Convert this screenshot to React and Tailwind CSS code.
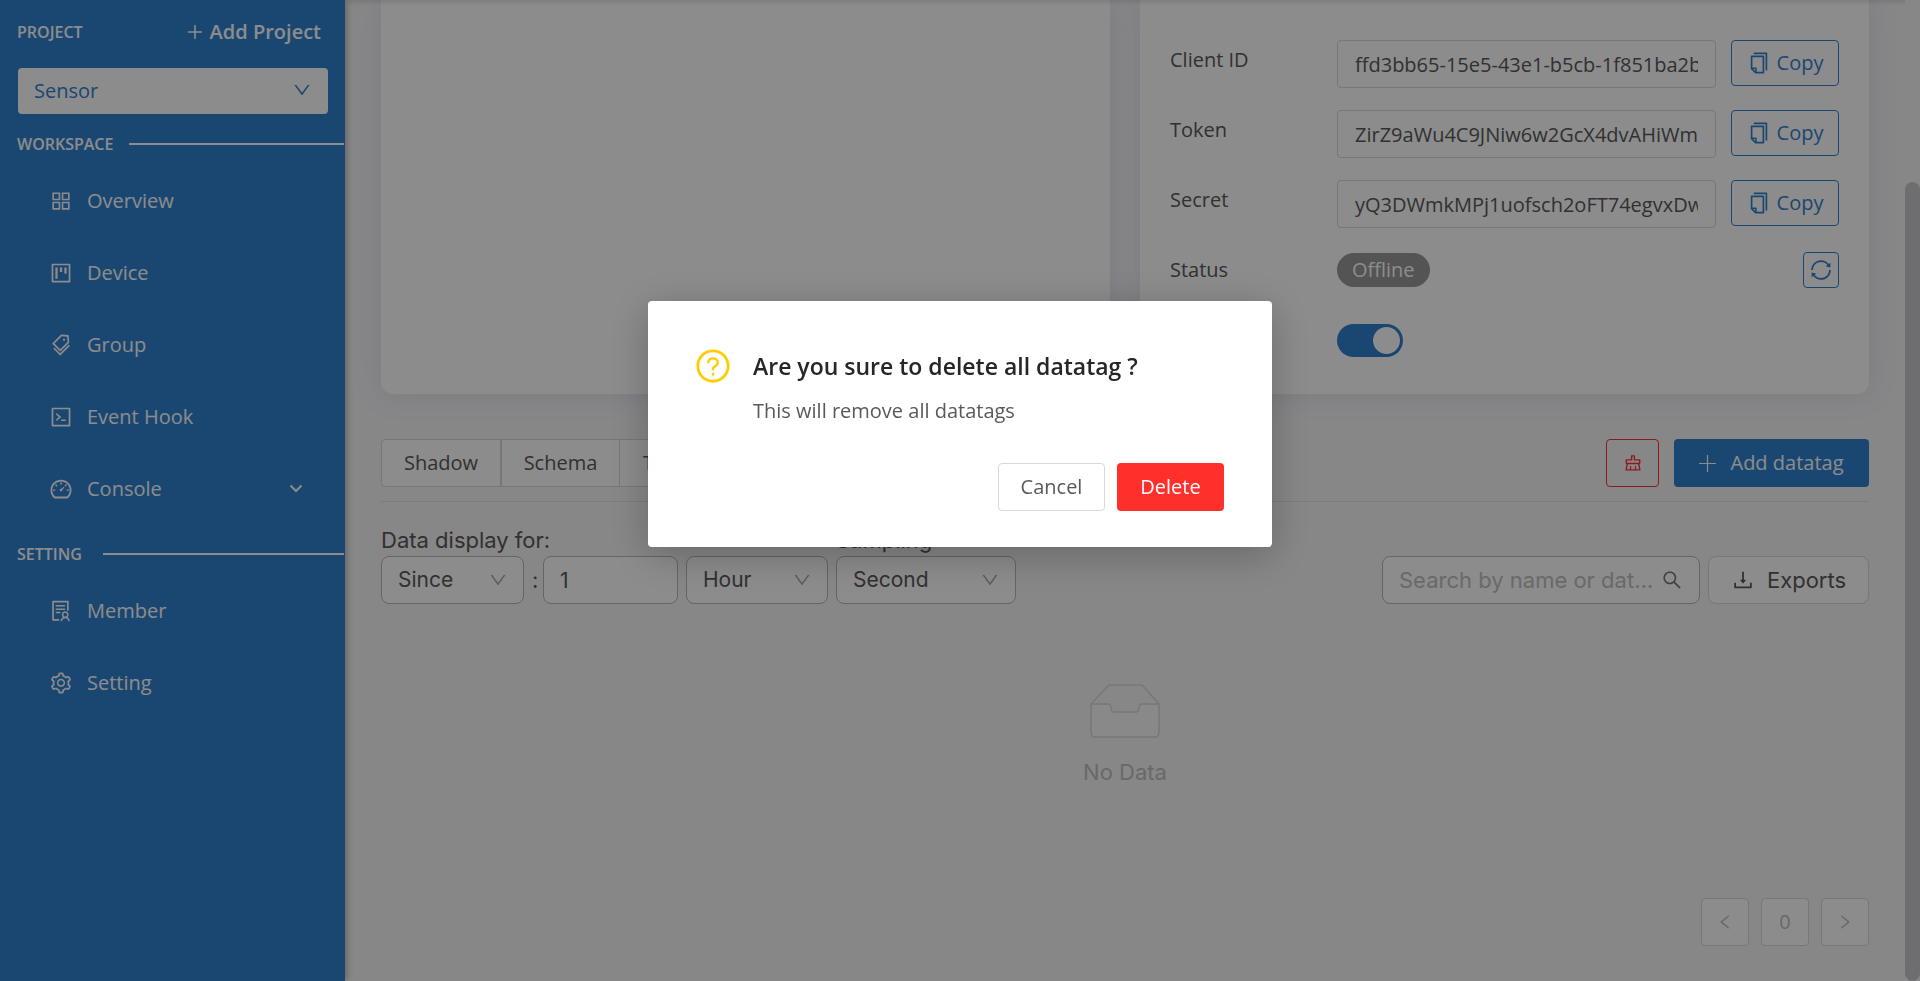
import React, { useState } from "react";
import {
  AiOutlineAppstore,
  AiOutlineProject,
  AiOutlineTags,
  AiOutlineCode,
  AiOutlineDashboard,
  AiOutlineSolution,
  AiOutlineSetting,
  AiOutlineDown,
  AiOutlineCopy,
  AiOutlineSync,
  AiOutlineClear,
  AiOutlineSearch,
  AiOutlineDownload,
  AiOutlineLeft,
  AiOutlineRight,
  AiOutlineQuestionCircle,
} from "react-icons/ai";

const workspaceItems = [
  { label: "Overview", Icon: AiOutlineAppstore },
  { label: "Device", Icon: AiOutlineProject },
  { label: "Group", Icon: AiOutlineTags },
  { label: "Event Hook", Icon: AiOutlineCode },
  { label: "Console", Icon: AiOutlineDashboard, expandable: true },
];

const settingItems = [
  { label: "Member", Icon: AiOutlineSolution },
  { label: "Setting", Icon: AiOutlineSetting },
];

const credentials = [
  { id: "client-id", label: "Client ID", value: "ffd3bb65-15e5-43e1-b5cb-1f851ba2b7c4" },
  { id: "token", label: "Token", value: "ZirZ9aWu4C9JNiw6w2GcX4dvAHiWmk7P" },
  { id: "secret", label: "Secret", value: "yQ3DWmkMPj1uofsch2oFT74egvxDwq8L" },
];

function NavSection({ title, items }) {
  return (
    <section>
      <div className="flex h-6 items-center gap-4 pl-[17px]">
        <h2 className="min-w-[70px] text-base font-semibold">{title}</h2>
        <span className="mr-px h-0.5 flex-1 bg-white" />
      </div>
      <ul className="pt-[9px]">
        {items.map(({ label, Icon, expandable }) => (
          <li key={label} className="h-[72px]">
            <a href="#" className="flex h-full items-center gap-3.5 pr-[42px] pl-[49px] text-xl">
              <Icon className="size-6" />
              <span className="flex-1">{label}</span>
              {expandable && (
                <svg viewBox="0 0 14 10" className="h-2.5 w-3.5" fill="none" stroke="currentColor" strokeWidth="2">
                  <path d="M1.5 1.5 7 7l5.500-5.500" />
                </svg>
              )}
            </a>
          </li>
        ))}
      </ul>
    </section>
  );
}

function Sidebar() {
  return (
    <aside className="z-10 flex w-[345px] shrink-0 flex-col bg-[#3182ce] text-white shadow-[0_0_8px_rgba(0,0,0,0.4)]">
      <div className="flex h-16 items-center justify-between pr-6 pl-[17px]">
        <h2 className="text-base font-semibold">PROJECT</h2>
        <button type="button" className="flex items-center gap-2 text-xl font-semibold">
          <svg viewBox="0 0 14 14" className="size-3.5" stroke="currentColor" strokeWidth="1.6">
            <path d="M7 0v14M0 7h14" />
          </svg>
          Add Project
        </button>
      </div>
      <div className="pt-1 pr-[17px] pl-[18px]">
        <div className="relative">
          <select
            aria-label="Project"
            className="h-[46px] w-full appearance-none rounded-sm bg-white px-4 text-xl text-[#3182ce]"
          >
            <option>Sensor</option>
          </select>
          <AiOutlineDown className="pointer-events-none absolute top-3 right-4 size-5 text-[#3182ce]" />
        </div>
      </div>
      <nav className="flex flex-col gap-[17px] pt-[18px]">
        <NavSection title="WORKSPACE" items={workspaceItems} />
        <NavSection title="SETTING" items={settingItems} />
      </nav>
    </aside>
  );
}

function CredentialRow({ id, label, value }) {
  return (
    <div className="flex h-12 items-start">
      <label htmlFor={id} className="w-[167px] shrink-0 pt-1.5">
        {label}
      </label>
      <input
        id={id}
        readOnly
        defaultValue={value}
        className="h-12 min-w-0 flex-1 rounded-sm border border-[#d9d9d9] bg-white px-[17px]"
      />
      <button
        type="button"
        className="ml-[15px] flex h-[46px] w-[108px] shrink-0 items-center justify-center gap-1.5 rounded-sm border border-[#3182ce] text-[#3182ce]"
      >
        <AiOutlineCopy className="size-6" />
        Copy
      </button>
    </div>
  );
}

function DeviceInfo() {
  const [enabled, setEnabled] = useState(true);
  return (
    <div className="flex min-w-0 flex-col gap-[22px] rounded-b-xl bg-white px-[30px] pt-10 pb-[26px] text-xl shadow-[0_0_28px_rgba(120,120,200,0.18)]">
      {credentials.map((c) => (
        <CredentialRow key={c.id} {...c} />
      ))}
      <div className="flex h-10 items-center">
        <span className="w-[167px]">Status</span>
        <span className="flex h-[34px] items-center rounded-full bg-[#999] px-[15px] text-white">Offline</span>
        <button
          type="button"
          aria-label="Refresh status"
          className="ml-auto flex size-9 items-center justify-center rounded-sm border border-[#3182ce] text-[#3182ce]"
        >
          <AiOutlineSync className="size-6" />
        </button>
      </div>
      <div className="flex h-14 items-center pl-[167px]">
        <label className="relative flex h-[33px] w-[66px] items-center justify-end rounded-full bg-[#3182ce] p-[3px]">
          <input
            type="checkbox"
            role="switch"
            aria-label="Device enabled"
            checked={enabled}
            onChange={() => setEnabled(!enabled)}
            className="absolute inset-0 appearance-none"
          />
          <span className="size-[27px] rounded-full bg-white shadow" />
        </label>
      </div>
    </div>
  );
}

function FilterSelect({ label, value, width }) {
  return (
    <div className={"relative " + width}>
      <select
        aria-label={label}
        className="h-12 w-full appearance-none rounded-lg border border-[#b8b8b8] bg-white px-4 text-[21px]"
      >
        <option>{value}</option>
      </select>
      <AiOutlineDown className="pointer-events-none absolute top-3.5 right-4 size-5 text-[#aaa]" />
    </div>
  );
}

function Filters() {
  return (
    <div className="flex items-end justify-between pt-6 font-[Inter,sans-serif] text-[22px] leading-7">
      <div className="flex items-end gap-2">
        <div>
          <p className="pb-0.5">Data display for:</p>
          <div className="flex items-center gap-2">
            <FilterSelect label="Range type" value="Since" width="w-[143px]" />
            <span className="w-[3px]">:</span>
            <input
              aria-label="Range amount"
              defaultValue="1"
              className="h-12 w-[135px] rounded-lg border border-[#b8b8b8] bg-white px-4 text-[21px]"
            />
            <FilterSelect label="Range unit" value="Hour" width="w-[142px]" />
          </div>
        </div>
        <div>
          <p className="pb-0.5">Sampling</p>
          <FilterSelect label="Sampling" value="Second" width="w-[180px]" />
        </div>
      </div>
      <div className="flex items-center gap-2">
        <div className="flex h-12 w-[318px] items-center gap-1.5 rounded-lg border border-[#b8b8b8] bg-white px-4">
          <input
            aria-label="Search"
            placeholder="Search by name or datatag"
            className="w-0 flex-1 bg-transparent text-ellipsis outline-none placeholder:text-[#bfbfbf]"
          />
          <AiOutlineSearch className="size-[22px] text-[#777]" />
        </div>
        <button
          type="button"
          className="flex h-12 w-[161px] items-center justify-center gap-3 rounded-lg border border-[#d9d9d9] bg-white"
        >
          <AiOutlineDownload className="size-6" />
          Exports
        </button>
      </div>
    </div>
  );
}

function EmptyState() {
  return (
    <div className="flex flex-col items-center gap-5 pt-20 font-[Inter,sans-serif] text-[22px] leading-7 text-[#bfbfbf]">
      <svg viewBox="0 0 70 54" className="h-[54px] w-[70px]" fill="none" stroke="#d9d9d9" strokeWidth="1.5">
        <path d="M1 20 18 2q1-1 2-1h31q1 0 2 1l16 18" />
        <path
          fill="#fafafa"
          d="M1 20h17q3 0 3 4t3 4h22q3 0 3-4t3-4h17v28q0 5-4 5H5q-4 0-4-5z"
        />
      </svg>
      <p>No Data</p>
    </div>
  );
}

function Pagination() {
  const box = "flex size-12 items-center justify-center rounded-sm border border-[#d9d9d9] bg-white";
  return (
    <nav aria-label="Pagination" className="mt-auto flex justify-end gap-3 text-xl text-[#bfbfbf]">
      <button type="button" aria-label="Previous page" className={box}>
        <AiOutlineLeft className="size-[18px]" />
      </button>
      <button type="button" className={box}>0</button>
      <button type="button" aria-label="Next page" className={box}>
        <AiOutlineRight className="size-[18px]" />
      </button>
    </nav>
  );
}

function ConfirmDialog() {
  return (
    <div className="fixed inset-0 z-20 flex items-start justify-center bg-black/45 pt-[301px]">
      <div
        role="dialog"
        aria-modal="true"
        aria-labelledby="confirm-title"
        className="w-[624px] rounded-sm bg-white pt-[46px] pr-12 pb-9 pl-[46px] text-xl shadow-[0_8px_40px_rgba(0,0,0,0.25)]"
      >
        <div className="flex gap-[21px]">
          <AiOutlineQuestionCircle className="size-[38px] shrink-0 text-[#ffcc00]" />
          <div>
            <h1 id="confirm-title" className="text-[23px] leading-[38px] font-semibold text-[#262626]">
              Are you sure to delete all datatag ?
            </h1>
            <p className="pt-2.5 leading-8 text-[#595959]">This will remove all datatags</p>
          </div>
        </div>
        <div className="flex justify-end gap-3 pt-9">
          <button type="button" className="h-12 w-[107px] rounded-sm border border-[#d9d9d9] text-[#595959]">
            Cancel
          </button>
          <button type="button" className="h-12 w-[107px] rounded-sm bg-[#ff302c] text-white">
            Delete
          </button>
        </div>
      </div>
    </div>
  );
}

export default function App() {
  return (
    <div className="flex min-h-screen bg-[#f6f6f8] font-['Open_Sans',sans-serif] text-[#595959]">
      <Sidebar />
      <main className="relative flex min-w-0 flex-1 flex-col px-9 pb-[35px]">
        <div className="absolute inset-x-0 top-0 h-1.5 bg-linear-to-b from-black/10 to-transparent" />
        <div className="grid grid-cols-2 gap-[30px]">
          <div className="rounded-b-xl bg-white shadow-[0_0_28px_rgba(120,120,200,0.18)]" />
          <DeviceInfo />
        </div>
        <div className="mt-[45px] flex items-center border-b border-[#e2e2e4] pb-3.5 text-xl">
          <div className="flex">
            <button type="button" className="h-12 w-[120px] rounded-l-sm border border-[#d9d9d9] bg-white">Shadow</button>
            <button type="button" className="h-12 w-[118px] border-y border-l border-[#d9d9d9] bg-white">Schema</button>
            <button type="button" className="h-12 rounded-r-sm border border-[#d9d9d9] bg-white px-[23px]">Trigger</button>
          </div>
          <button
            type="button"
            aria-label="Delete all datatags"
            className="ml-auto flex h-12 w-[53px] items-center justify-center rounded-sm border border-[#ff302c] text-[#ff302c]"
          >
            <AiOutlineClear className="size-5" />
          </button>
          <button
            type="button"
            className="ml-[15px] flex h-12 w-[195px] items-center justify-center gap-3.5 rounded-sm bg-[#3182ce] text-white"
          >
            <svg viewBox="0 0 17 17" className="size-[17px]" stroke="currentColor" strokeWidth="1.2">
              <path d="M8.5 0v17M0 8.500h17" />
            </svg>
            Add datatag
          </button>
        </div>
        <Filters />
        <EmptyState />
        <Pagination />
      </main>
      <div aria-hidden="true" className="w-[15px] shrink-0 pt-[182px]">
        <div className="h-full rounded-full bg-[#c8c9ce]" />
      </div>
      <ConfirmDialog />
    </div>
  );
}
